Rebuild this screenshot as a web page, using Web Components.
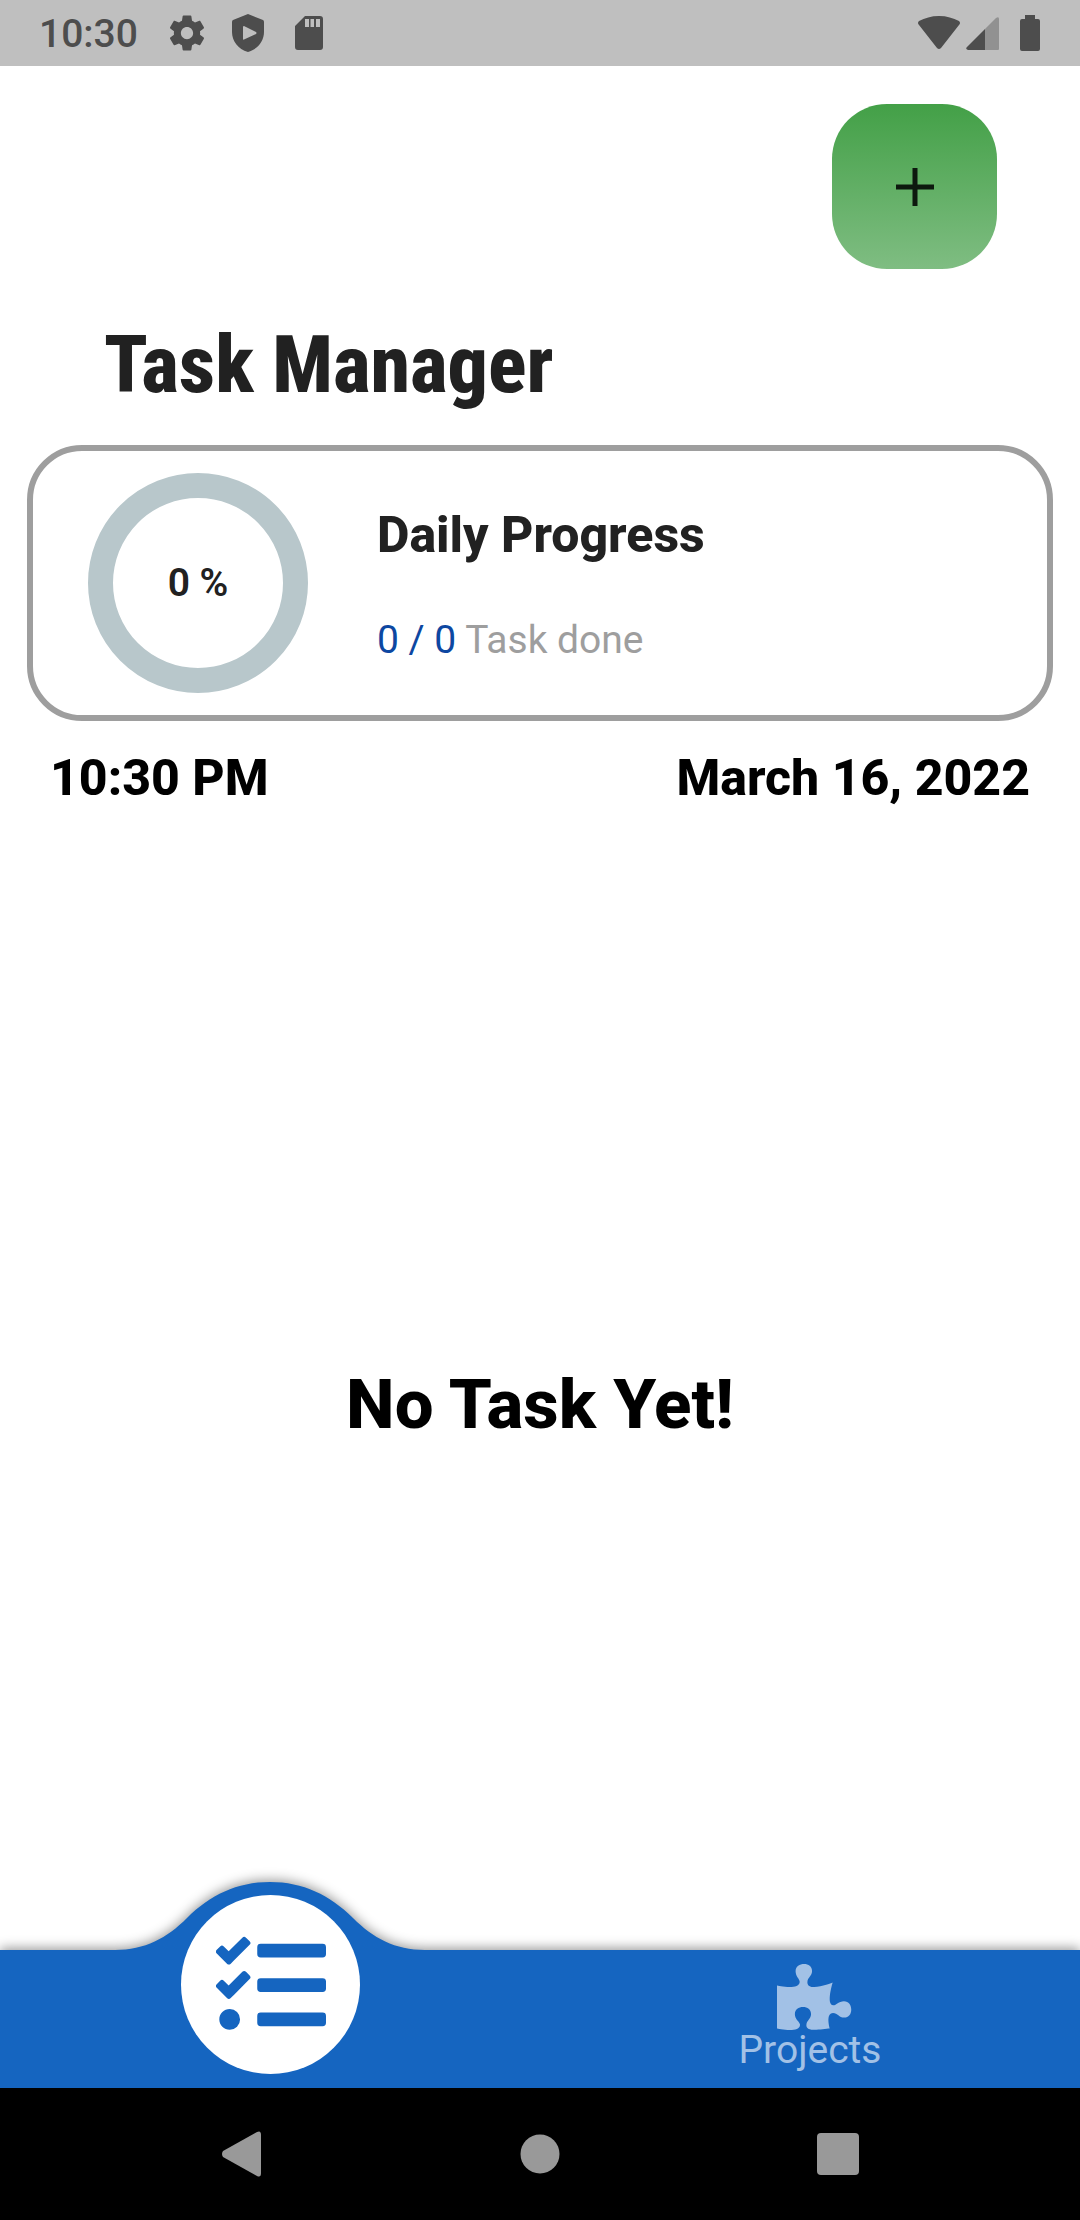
<!DOCTYPE html>
<html lang="en">
<head>
<meta charset="utf-8">
<meta name="viewport" content="width=device-width, initial-scale=1">
<title>Task Manager</title>
<style>
  html, body { margin: 0; background: #fff; }
  body { font-family: Roboto, "Liberation Sans", sans-serif; color: #000; }
</style>
</head>
<body>
<task-app></task-app>
<script>
const define = (name, html) => {
  const template = document.createElement('template');
  template.innerHTML = html;
  customElements.define(name, class extends HTMLElement {
    constructor() {
      super();
      this.attachShadow({ mode: 'open' }).append(template.content.cloneNode(true));
    }
  });
};

define('status-bar', `
<style>
  :host { display: flex; justify-content: space-between; align-items: center; height: 66px; padding: 0 40px 0 39px; background: #bfbfbf; color: #4d4d4d; }
  .side { display: flex; align-items: center; gap: 19px; }
  .side.right { gap: 6px; }
  time { font-size: 39px; font-weight: 500; line-height: 46px; margin-right: 9px; padding-top: 2px; }
  svg { display: block; fill: currentColor; }
  .battery { margin-left: 15px; }
</style>
<div class="side">
  <time>10:30</time>
  <svg width="42" height="42" viewBox="0 0 24 24"><path d="M19.43 12.98c.04-.32.07-.64.07-.98s-.03-.66-.07-.98l2.11-1.65c.19-.15.24-.42.12-.64l-2-3.46c-.12-.22-.39-.3-.61-.22l-2.49 1c-.52-.4-1.08-.73-1.69-.98l-.38-2.65C14.46 2.18 14.25 2 14 2h-4c-.25 0-.46.18-.49.42l-.38 2.65c-.61.25-1.17.59-1.69.98l-2.49-1c-.23-.09-.49 0-.61.22l-2 3.46c-.13.22-.07.49.12.64l2.11 1.65c-.04.32-.07.65-.07.98s.03.66.07.98l-2.11 1.65c-.19.15-.24.42-.12.64l2 3.46c.12.22.39.3.61.22l2.49-1c.52.4 1.08.73 1.69.98l.38 2.65c.03.24.24.42.49.42h4c.25 0 .46-.18.49-.42l.38-2.65c.61-.25 1.17-.59 1.69-.98l2.49 1c.23.09.49 0 .61-.22l2-3.46c.12-.22.07-.49-.12-.64l-2.11-1.65zM12 15.5c-1.93 0-3.5-1.57-3.5-3.5s1.57-3.5 3.5-3.5 3.5 1.57 3.5 3.5-1.57 3.5-3.5 3.5z"/></svg>
  <svg width="42" height="42" viewBox="0 0 42 42"><path fill-rule="evenodd" d="M21 2L36 8Q37 8.500 37 10V20C37 29 31 37 21 40C11 37 5 29 5 20V10Q5 8.500 6 8ZM16 15V27Q16 28 17 27.500L29 22Q30 21 29 20L17 14Q16 14 16 15Z"/></svg>
  <svg width="42" height="42" viewBox="0 0 42 42"><path fill-rule="evenodd" d="M17 4H32Q35 4 35 7V35Q35 38 32 38H10Q7 38 7 35V14ZM17 7V15H21V7ZM22.500 7V15H26V7ZM28 7V15H32V7Z"/></svg>
</div>
<div class="side right">
  <svg width="42" height="36" viewBox="0 0 42 36"><path d="M21 1C29 1 35 3 41 6Q43 8 41 10L23 33Q21 35 19 33L1 10Q-1 8 1 6C7 3 13 1 21 1Z"/></svg>
  <svg width="33" height="36" viewBox="0 0 33 36"><path opacity=".4" d="M19 14L30 3Q33 1 33 4V34Q33 35 32 35H19Z"/><path d="M19 14V35H2Q-1 34 1 32Z"/></svg>
  <svg class="battery" width="20" height="36" viewBox="0 0 20 36"><path d="M5 0H15V4H18Q20 4 20 6V34Q20 36 18 36H2Q0 36 0 34V6Q0 4 2 4H5Z"/></svg>
</div>`);

define('add-button', `
<style>
  :host { display: block; }
  button { display: flex; align-items: center; justify-content: center; width: 165px; height: 165px; padding: 0; border: 0; border-radius: 55px; background: linear-gradient(#43a047, #7fbd82); color: #0d190e; cursor: pointer; }
  svg { display: block; }
</style>
<button type="button" aria-label="Add task">
  <svg width="40" height="40" viewBox="0 0 40 40" stroke="currentColor" stroke-width="5"><path d="M20 1V39M1 20H39"/></svg>
</button>`);

define('progress-ring', `
<style>
  :host { display: flex; align-items: center; justify-content: center; flex: none; box-sizing: border-box; width: 220px; height: 220px; border: 25px solid #b8c7cb; border-radius: 50%; color: #212121; font-size: 39px; font-weight: 600; line-height: 46px; }
</style>
<slot></slot>`);

define('progress-card', `
<style>
  :host { display: flex; align-items: center; gap: 69px; box-sizing: border-box; margin: 0 27px; padding: 22px 55px; border: 6px solid #9e9e9e; border-radius: 55px; }
  .text { display: flex; flex-direction: column; gap: 53px; padding-top: 3px; }
  h2 { margin: 0; color: #212121; font-size: 50px; font-weight: 800; line-height: 58px; }
  p { margin: 0; color: #9e9e9e; font-size: 39px; line-height: 46px; }
</style>
<progress-ring><slot name="percent"></slot></progress-ring>
<div class="text">
  <h2><slot name="title"></slot></h2>
  <p><slot></slot></p>
</div>`);

define('date-row', `
<style>
  :host { display: flex; justify-content: space-between; padding: 28px 50px 0; font-size: 50px; font-weight: 800; line-height: 58px; }
</style>
<slot></slot>`);

define('empty-state', `
<style>
  :host { display: flex; flex: 1; align-items: center; justify-content: center; padding-top: 52px; }
  p { margin: 0; font-size: 69px; font-weight: 800; line-height: 80px; }
</style>
<p><slot></slot></p>`);

define('tab-bar', `
<style>
  :host { display: block; position: relative; height: 138px; background: #1565c0; filter: drop-shadow(0 -2px 6px rgba(0,0,0,.4)); }
  nav { display: flex; height: 100%; }
  a { flex: 1; position: relative; display: flex; flex-direction: column; align-items: center; color: #a2c1e6; text-decoration: none; font-size: 39px; line-height: 40px; }
  svg { display: block; fill: currentColor; }
  .hump { position: absolute; bottom: 137px; left: calc(50% - 155px); color: #1565c0; }
  .disc { position: absolute; bottom: 14px; left: calc(50% - 89px); display: flex; align-items: center; justify-content: center; width: 179px; height: 179px; border-radius: 50%; background: #fff; color: #1565c0; }
  .piece { overflow: visible; margin-top: 14px; }
</style>
<nav>
  <a href="#tasks" aria-label="Tasks" aria-current="page">
    <svg class="hump" width="310" height="69" viewBox="0 0 310 69"><path d="M0 68C30 68 52 56 72 36C95 13 122 0 155 0S215 13 238 36C258 56 280 68 310 68V69H0Z"/></svg>
    <span class="disc"><svg width="110" height="110" viewBox="0 0 512 512"><path d="M139.610 35.500a12 12 0 0 0-17 0L58.930 98.810l-22.700-22.120a12 12 0 0 0-17 0L3.530 92.410a12 12 0 0 0 0 17l47.590 47.400a12.780 12.780 0 0 0 17.610 0l15.590-15.620L156.520 69a12.090 12.090 0 0 0 .09-17zm0 159.190a12 12 0 0 0-17 0l-63.680 63.720-22.700-22.100a12 12 0 0 0-17 0L3.530 252a12 12 0 0 0 0 17L51 316.500a12.770 12.770 0 0 0 17.600 0l15.700-15.690 72.200-72.220a12 12 0 0 0 .09-16.900zM64 368c-26.490 0-48.590 21.500-48.590 48S37.530 464 64 464a48 48 0 0 0 0-96zm432 16H208a16 16 0 0 0-16 16v32a16 16 0 0 0 16 16h288a16 16 0 0 0 16-16v-32a16 16 0 0 0-16-16zm0-320H208a16 16 0 0 0-16 16v32a16 16 0 0 0 16 16h288a16 16 0 0 0 16-16V80a16 16 0 0 0-16-16zm0 160H208a16 16 0 0 0-16 16v32a16 16 0 0 0 16 16h288a16 16 0 0 0 16-16v-32a16 16 0 0 0-16-16z"/></svg></span>
  </a>
  <a href="#projects">
    <svg class="piece" width="66" height="66" viewBox="0 0 512 512"><path d="M519.442 288.651c-41.519 0-59.500 31.593-82.058 31.593C377.409 320.244 432 144 432 144s-196.288 80-196.288-3.297c0-35.827 36.288-46.250 36.288-85.985C272 19.216 243.885 0 210.539 0c-34.654 0-66.366 18.891-66.366 56.346 0 41.364 31.711 59.277 31.711 81.750C175.885 207.719 0 166.758 0 166.758v333.237s178.635 41.047 178.635-28.662c0-22.473-40-40.107-40-81.471 0-37.456 29.250-56.346 63.577-56.346 33.673 0 61.788 19.216 61.788 54.717 0 39.735-36.288 50.158-36.288 85.985 0 60.803 129.675 25.730 181.230 25.730 0 0-34.725-120.101 25.827-120.101 35.962 0 46.423 36.152 86.308 36.152C556.712 416 576 387.990 576 354.443c0-34.199-18.962-65.792-56.558-65.792z"/></svg>
    <span>Projects</span>
  </a>
</nav>`);

define('system-nav', `
<style>
  :host { display: flex; align-items: center; justify-content: center; position: relative; height: 132px; background: #000; }
  button { display: flex; align-items: center; justify-content: center; flex: 0 1 298px; height: 100%; padding: 0; border: 0; background: none; color: #999; }
  svg { display: block; fill: currentColor; }
</style>
<button type="button" aria-label="Back"><svg width="40" height="46" viewBox="0 0 40 46"><path d="M1 20L35 1Q39 -1 39 4V42Q39 47 35 45L1 26Q-1 23 1 20Z"/></svg></button>
<button type="button" aria-label="Home"><svg width="40" height="40" viewBox="0 0 40 40"><circle cx="20" cy="20" r="19.500"/></svg></button>
<button type="button" aria-label="Recents"><svg width="42" height="42" viewBox="0 0 42 42"><rect width="42" height="42" rx="4"/></svg></button>`);

define('task-app', `
<style>
  :host { display: flex; flex-direction: column; min-height: 100vh; }
  main { flex: 1; display: flex; flex-direction: column; }
  add-button { align-self: flex-end; margin: 38px 83px 0 0; }
  h1 { margin: 46px 104px 30px; color: #212121; font-family: "Roboto Condensed", "Liberation Sans Narrow", Roboto, sans-serif; font-size: 80px; font-weight: 800; line-height: 100px; }
  .count { color: #0d47a1; }
</style>
<status-bar></status-bar>
<main>
  <add-button></add-button>
  <h1>Task Manager</h1>
  <progress-card>
    <span slot="percent">0 %</span>
    <span slot="title">Daily Progress</span>
    <span class="count">0 / 0</span> Task done
  </progress-card>
  <date-row><time>10:30 PM</time><time>March 16, 2022</time></date-row>
  <empty-state>No Task Yet!</empty-state>
</main>
<tab-bar></tab-bar>
<system-nav></system-nav>`);
</script>
</body>
</html>
